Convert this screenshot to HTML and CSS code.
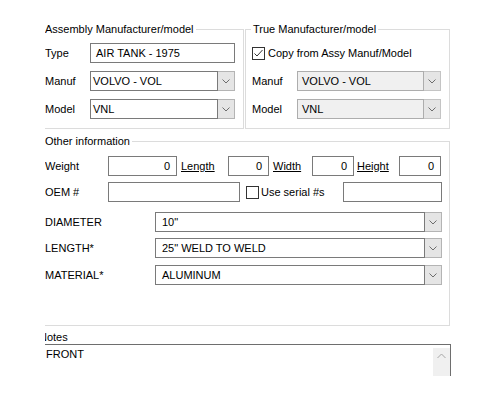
FILE: index.html
```html
<!DOCTYPE html>
<html>
<head>
<meta charset="utf-8">
<title>Part details</title>
<link rel="stylesheet" href="styles.css">
</head>
<body>
<div class="window">
  <div class="form">
    <div class="top-row">
      <fieldset class="group group-assy">
        <legend>Assembly Manufacturer/model</legend>
        <div class="rows">
          <span class="lbl">Type</span>
          <div class="field pad-type">AIR TANK - 1975</div>
          <span class="lbl">Manuf</span>
          <div class="combo">
            <div class="combo-field pad-assy">VOLVO - VOL</div>
            <div class="combo-btn"><svg width="8" height="5" viewBox="0 0 8 5"><polyline points="0.5,0.5 4,4 7.5,0.5" /></svg></div>
          </div>
          <span class="lbl">Model</span>
          <div class="combo">
            <div class="combo-field pad-assy">VNL</div>
            <div class="combo-btn"><svg width="8" height="5" viewBox="0 0 8 5"><polyline points="0.5,0.5 4,4 7.5,0.5" /></svg></div>
          </div>
        </div>
      </fieldset>
      <fieldset class="group group-true">
        <legend>True Manufacturer/model</legend>
        <div class="rows">
          <div class="check-row">
            <span class="checkbox"><svg width="11" height="11" viewBox="0 0 11 11"><polyline points="1.5,5.5 4,8 9.5,2" /></svg></span>
            <span>Copy from Assy Manuf/Model</span>
          </div>
          <span class="lbl">Manuf</span>
          <div class="combo disabled">
            <div class="combo-field pad-true">VOLVO - VOL</div>
            <div class="combo-btn"><svg width="8" height="5" viewBox="0 0 8 5"><polyline points="0.5,0.5 4,4 7.5,0.5" /></svg></div>
          </div>
          <span class="lbl">Model</span>
          <div class="combo disabled">
            <div class="combo-field pad-true">VNL</div>
            <div class="combo-btn"><svg width="8" height="5" viewBox="0 0 8 5"><polyline points="0.5,0.5 4,4 7.5,0.5" /></svg></div>
          </div>
        </div>
      </fieldset>
    </div>

    <fieldset class="group group-other">
      <legend>Other information</legend>
      <div class="line dims">
        <span class="lbl w-weight">Weight</span>
        <div class="field num w-weight-in">0</div>
        <span class="lbl link w-length">Length</span>
        <div class="field num w-length-in">0</div>
        <span class="lbl link w-width">Width</span>
        <div class="field num w-width-in">0</div>
        <span class="lbl link w-height">Height</span>
        <div class="field num w-height-in">0</div>
      </div>
      <div class="line oem">
        <span class="lbl w-weight">OEM #</span>
        <div class="field w-oem-in"></div>
        <span class="checkbox serial-box"></span>
        <span class="serial-lbl">Use serial #s</span>
        <div class="field w-serial-in"></div>
      </div>
      <div class="line attr attr-diameter">
        <span class="lbl w-attr">DIAMETER</span>
        <div class="combo grow">
          <div class="combo-field pad-attr">10"</div>
          <div class="combo-btn"><svg width="8" height="5" viewBox="0 0 8 5"><polyline points="0.5,0.5 4,4 7.5,0.5" /></svg></div>
        </div>
      </div>
      <div class="line attr attr-length">
        <span class="lbl w-attr">LENGTH*</span>
        <div class="combo grow">
          <div class="combo-field pad-attr">25" WELD TO WELD</div>
          <div class="combo-btn"><svg width="8" height="5" viewBox="0 0 8 5"><polyline points="0.5,0.5 4,4 7.5,0.5" /></svg></div>
        </div>
      </div>
      <div class="line attr attr-material">
        <span class="lbl w-attr">MATERIAL*</span>
        <div class="combo grow">
          <div class="combo-field pad-attr">ALUMINUM</div>
          <div class="combo-btn"><svg width="8" height="5" viewBox="0 0 8 5"><polyline points="0.5,0.5 4,4 7.5,0.5" /></svg></div>
        </div>
      </div>
    </fieldset>

    <div class="notes-label">Notes</div>
    <div class="notes-box">
      <div class="notes-text">FRONT</div>
      <div class="scrollbar"><svg width="9" height="6" viewBox="0 0 9 6"><polyline points="0.5,5 4.5,1 8.5,5" /></svg></div>
    </div>
  </div>
</div>
</body>
</html>
```

FILE: styles.css
```css
* {
  box-sizing: border-box;
}

html,
body {
  margin: 0;
  background: #fff;
}

body {
  font: 11px/14px "Liberation Sans", Arial, sans-serif;
  color: #000;
}

/* visible client area of the form; the left edge of the panels is scrolled out of view */
.window {
  margin-left: 45px;
  width: 420px;
  height: 376px;
  overflow: hidden;
}

.form {
  margin-left: -6px;
  width: 420px;
  padding-top: 22px;
}

/* group boxes */
.top-row {
  display: flex;
  gap: 1px;
}

.group {
  margin: 0;
  min-width: 0;
  border: 1px solid #dcdcdc;
}

.group legend {
  padding: 0 2px;
  line-height: 14px;
}

.group-assy {
  width: 205px;
  padding: 7px 8px 9px 5px;
}

.group-assy legend,
.group-other legend {
  margin-left: -2px;
}

.group-true {
  width: 205px;
  padding: 7px 8px 8px 6px;
}

.group-true legend {
  margin-left: -1px;
}

.group-other {
  width: 411px;
  margin-top: 5px;
  padding: 8px 7px 40px 5px;
}

.rows {
  display: grid;
  grid-template-columns: 45px 1fr;
  grid-auto-rows: 20px;
  row-gap: 8px;
  align-items: center;
}

.lbl {
  white-space: nowrap;
}

.link {
  text-decoration: underline;
}

/* text boxes */
.field {
  height: 20px;
  border: 1px solid #7a7a7a;
  background: #fff;
  display: flex;
  align-items: center;
  white-space: nowrap;
  overflow: hidden;
}

.field.num {
  justify-content: flex-end;
  padding-right: 6px;
}

.pad-type {
  padding-left: 5px;
}

/* combo boxes */
.combo {
  display: flex;
  height: 20px;
}

.combo.grow {
  flex: 1;
}

.combo-field {
  flex: 1;
  min-width: 0;
  border: 1px solid #7a7a7a;
  background: #fff;
  display: flex;
  align-items: center;
  white-space: nowrap;
  overflow: hidden;
}

.pad-assy {
  padding-left: 2px;
}

.pad-true {
  padding-left: 4px;
}

.pad-attr {
  padding-left: 6px;
}

.combo-btn {
  width: 17px;
  border: 1px solid #b4b4b4;
  border-left: none;
  background: #e5e5e5;
  display: flex;
  align-items: center;
  justify-content: center;
}

.combo-btn svg {
  fill: none;
  stroke: #6d6d6d;
  stroke-width: 1;
}

.combo.disabled .combo-field {
  background: #f0f0f0;
  border-color: #adadad;
}

.combo.disabled .combo-btn {
  border-color: #c4c4c4;
}

/* check boxes */
.check-row {
  grid-column: 1 / -1;
  display: flex;
  align-items: center;
  gap: 3px;
}

.checkbox {
  width: 13px;
  height: 13px;
  border: 1px solid #333;
  background: #fff;
  display: flex;
  align-items: center;
  justify-content: center;
  flex: none;
}

.checkbox svg {
  fill: none;
  stroke: #333;
  stroke-width: 1;
}

/* "Other information" rows */
.line {
  display: flex;
  align-items: center;
  height: 20px;
}

.w-weight {
  width: 63px;
}

.w-weight-in {
  width: 69px;
  padding-right: 4px;
}

.w-length {
  width: 47px;
  margin-left: 4px;
}

.w-length-in {
  width: 41px;
}

.w-width {
  width: 39px;
  margin-left: 4px;
}

.w-width-in {
  width: 42px;
}

.w-height {
  width: 42px;
  margin-left: 3px;
}

.w-height-in {
  width: 42px;
}

.oem {
  margin-top: 6px;
}

.w-oem-in {
  width: 132px;
}

.serial-box {
  margin-left: 6px;
}

.serial-lbl {
  margin-left: 2px;
}

.w-serial-in {
  width: 99px;
  margin-left: auto;
}

.w-attr {
  width: 110px;
}

.attr-diameter {
  margin-top: 10px;
}

.attr-length {
  margin-top: 6px;
}

.attr-material {
  margin-top: 7px;
}

/* notes */
.notes-label {
  margin-top: 5px;
  line-height: 13px;
}

.notes-box {
  display: flex;
  width: 412px;
  height: 60px;
  border: 1px solid #6e6e6e;
  border-bottom: none;
}

.notes-text {
  flex: 1;
  padding: 2px 0 0 6px;
}

.scrollbar {
  width: 17px;
  margin-top: 3px;
  background: #f0f0f0;
  display: flex;
  justify-content: center;
  align-items: flex-start;
  padding-top: 5px;
}

.scrollbar svg {
  fill: none;
  stroke: #a6a6a6;
  stroke-width: 1;
}
```
